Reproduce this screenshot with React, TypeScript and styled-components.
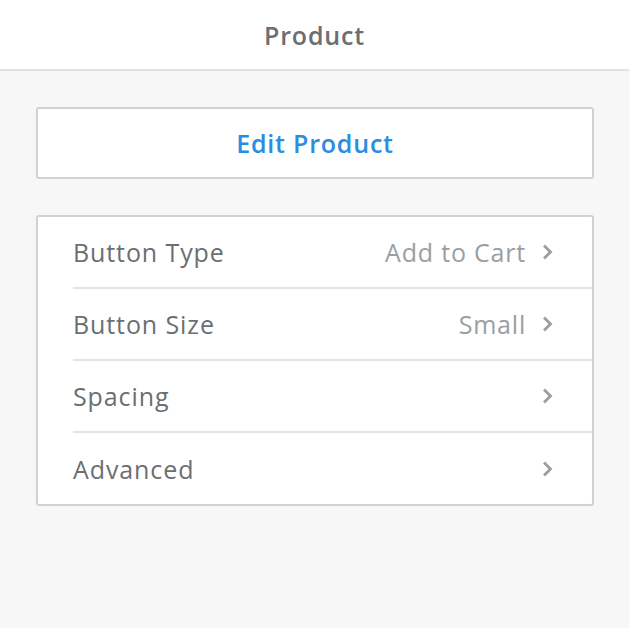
import styled, { createGlobalStyle } from "styled-components";

const GlobalStyle = createGlobalStyle`
  html, body {
    margin: 0;
    padding: 0;
    background: #f7f7f7;
  }
  body {
    font-family: "Open Sans", "Lato", sans-serif;
    -webkit-font-smoothing: antialiased;
  }
`;

type Setting = {
  label: string;
  value?: string;
};

const settings: Setting[] = [
  { label: "Button Type", value: "Add to Cart" },
  { label: "Button Size", value: "Small" },
  { label: "Spacing" },
  { label: "Advanced" },
];

const Chevron = () => (
  <svg width="12" height="18" viewBox="0 0 12 18" fill="none">
    <path
      d="M2 2.5 L8.5 9 L2 15.5"
      stroke="#9a9ea1"
      strokeWidth="2.8"
      strokeLinecap="butt"
      strokeLinejoin="miter"
    />
  </svg>
);

const App = () => {
  return (
    <>
      <GlobalStyle />
      <Page>
        <Header>Product</Header>
        <Content>
          <EditButton type="button">Edit Product</EditButton>
          <List>
            {settings.map((item) => (
              <Row key={item.label}>
                <Label>{item.label}</Label>
                <Right>
                  {item.value && <Value>{item.value}</Value>}
                  <Chevron />
                </Right>
              </Row>
            ))}
          </List>
        </Content>
      </Page>
    </>
  );
};

export default App;

const Page = styled.div`
  min-height: 628px;
  background: #f7f7f7;
`;

const Header = styled.header`
  height: 69px;
  display: flex;
  align-items: center;
  justify-content: center;
  background: #fff;
  border-bottom: 2px solid #e2e2e2;
  color: #6b6f72;
  font-size: 25px;
  font-weight: 600;
  letter-spacing: 0.8px;
`;

const Content = styled.main`
  display: grid;
  gap: 36px;
  padding: 36px 35px 0 36px;
`;

const EditButton = styled.button`
  height: 72px;
  width: 100%;
  background: #fff;
  border: 2px solid #cfd2d4;
  border-radius: 3px;
  color: #2a8de4;
  font-family: inherit;
  font-size: 25px;
  font-weight: 600;
  letter-spacing: 0.8px;
  cursor: pointer;
`;

const List = styled.ul`
  list-style: none;
  margin: 0;
  padding: 0 0 0 35px;
  background: #fff;
  border: 2px solid #cfd2d4;
  border-radius: 3px;
`;

const Row = styled.li`
  height: 72px;
  display: flex;
  align-items: center;
  justify-content: space-between;
  padding-right: 38px;
  border-bottom: 2px solid #e4e4e4;
  box-sizing: border-box;
  &:last-child {
    border-bottom: none;
    height: 71px;
  }
`;

const Label = styled.span`
  color: #6b6f72;
  font-size: 25px;
  letter-spacing: 0.9px;
`;

const Right = styled.span`
  display: flex;
  align-items: center;
  gap: 16px;
`;

const Value = styled.span`
  color: #9a9ea1;
  font-size: 25px;
  letter-spacing: 0.8px;
`;
